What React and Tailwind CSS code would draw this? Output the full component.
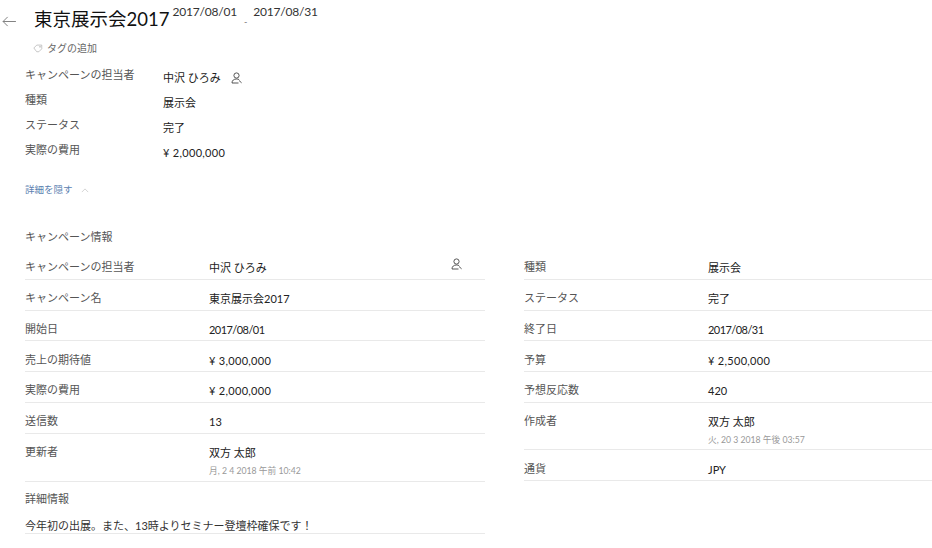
import React from "react";

const font = { fontFamily: 'Lato, "Noto Sans CJK JP", sans-serif' };

function UserIcon({ className }) {
  return (
    <svg viewBox="0 0 12 12" fill="none" stroke="#444" strokeWidth="0.9" className={className}>
      <circle cx="5.5" cy="3.5" r="2.6" />
      <path d="M1 11c0-2.6 1.8-4 4.5-4 1 0 1.9.2 2.6.6" />
      <path d="M1 11h6.5" />
      <path d="M8 8.5l2.6 2.3" />
    </svg>
  );
}

function Row({ label, value, sub, icon, valueClass = "", heightClass = "h-[30.75px]" }) {
  return (
    <div className={`flex border-b border-[#e9e9e9] ${heightClass}`}>
      <div className="w-[184px] shrink-0 pt-[10.4px] text-[11px] leading-[16px] text-[#555]">{label}</div>
      <div className="flex-1 pt-[11.4px] text-[11px] leading-[16px] text-[#222]">
        <div className={valueClass}>{value}</div>
        {sub && <div className="mt-[4px] text-[8.7px] leading-[12px] text-[#999]">{sub}</div>}
      </div>
      {icon && <UserIcon className="mr-[22px] mt-[9px] h-[12px] w-[12px]" />}
    </div>
  );
}

function Summary({ label, value, icon, valueClass = "" }) {
  return (
    <div className="flex h-[25px]">
      <div className="w-[138px] shrink-0 text-[11px] leading-[16px] text-[#555]">{label}</div>
      <div className="flex items-start pt-[3px] text-[11px] leading-[16px] text-[#222]">
        <span className={valueClass}>{value}</span>
        {icon && <UserIcon className="ml-[10px] mt-[2px] h-[12px] w-[12px]" />}
      </div>
    </div>
  );
}

export default function App() {
  const money = "tracking-[0.3px]";
  const date = "tracking-[-0.55px]";
  return (
    <div style={font} className="h-[548px] w-[932px] overflow-hidden bg-white">
      <div className="flex h-[34px] items-start">
        <svg viewBox="0 0 16 12" fill="none" stroke="#777" strokeWidth="1" className="ml-[2px] mt-[16px] h-[11px] w-[15px]">
          <path d="M15 6H1M6 1L1 6l5 5" />
        </svg>
        <div className="ml-[17px] mt-[5px] text-[18.5px] leading-[28px] text-[#111]">東京展示会2017</div>
        <div className="ml-[3px] mt-[4px] text-[12px] leading-[16px] tracking-[-0.2px] text-[#333]">2017/08/01</div>
        <div className="ml-[7px] mt-[17px] text-[9px] leading-[10px] text-[#777]">-</div>
        <div className="ml-[6px] mt-[4px] text-[12px] leading-[16px] tracking-[-0.2px] text-[#333]">2017/08/31</div>
      </div>

      <div className="ml-[33px] mt-[6px] flex h-[16px] items-center text-[10px] text-[#666]">
        <svg viewBox="0 0 12 12" fill="none" stroke="#aaa" strokeWidth="0.8" className="mr-[4px] h-[10px] w-[10px]">
          <path d="M1 6L4.5 2.5H10.5V7L7 10.5H4.5Z" />
          <circle cx="8.4" cy="4.6" r="0.6" />
        </svg>
        タグの追加
      </div>

      <div className="ml-[25px] mt-[11px]">
        <Summary label="キャンペーンの担当者" value="中沢 ひろみ" icon />
        <Summary label="種類" value="展示会" />
        <Summary label="ステータス" value="完了" />
        <Summary label="実際の費用" value="¥ 2,000,000" valueClass={money} />
      </div>

      <div className="ml-[25px] mt-[15px] flex h-[16px] items-center text-[9.5px] text-[#5a7fb0]">
        詳細を隠す
        <svg viewBox="0 0 10 6" fill="none" stroke="#bbb" strokeWidth="0.8" className="ml-[8px] h-[5px] w-[8px]">
          <path d="M1 5l4-4 4 4" />
        </svg>
      </div>

      <div className="ml-[25px] mt-[31px] h-[16px] text-[11px] leading-[16px] text-[#555]">キャンペーン情報</div>

      <div className="ml-[25px] mt-[4px] flex items-start">
        <div className="w-[460px] shrink-0">
          <Row label="キャンペーンの担当者" value="中沢 ひろみ" icon />
          <Row label="キャンペーン名" value="東京展示会2017" />
          <Row label="開始日" value="2017/08/01" valueClass={date} />
          <Row label="売上の期待値" value="¥ 3,000,000" valueClass={money} />
          <Row label="実際の費用" value="¥ 2,000,000" valueClass={money} />
          <Row label="送信数" value="13" />
          <Row label="更新者" value="双方 太郎" sub="月, 2 4 2018 午前 10:42" heightClass="h-[48px]" />
        </div>
        <div className="ml-[39px] flex-1">
          <Row label="種類" value="展示会" />
          <Row label="ステータス" value="完了" />
          <Row label="終了日" value="2017/08/31" valueClass={date} />
          <Row label="予算" value="¥ 2,500,000" valueClass={money} />
          <Row label="予想反応数" value="420" />
          <Row label="作成者" value="双方 太郎" sub="火, 20 3 2018 午後 03:57" heightClass="h-[47.5px]" />
          <Row label="通貨" value="JPY" />
        </div>
      </div>

      <div className="ml-[25px] mt-[9.4px] h-[16px] text-[11px] leading-[16px] text-[#555]">詳細情報</div>
      <div className="ml-[25px] mt-[11px] h-[16.6px] w-[460px] border-b border-[#e9e9e9] text-[11px] leading-[16px] text-[#333]">
        今年初の出展。また、13時よりセミナー登壇枠確保です！
      </div>
    </div>
  );
}
